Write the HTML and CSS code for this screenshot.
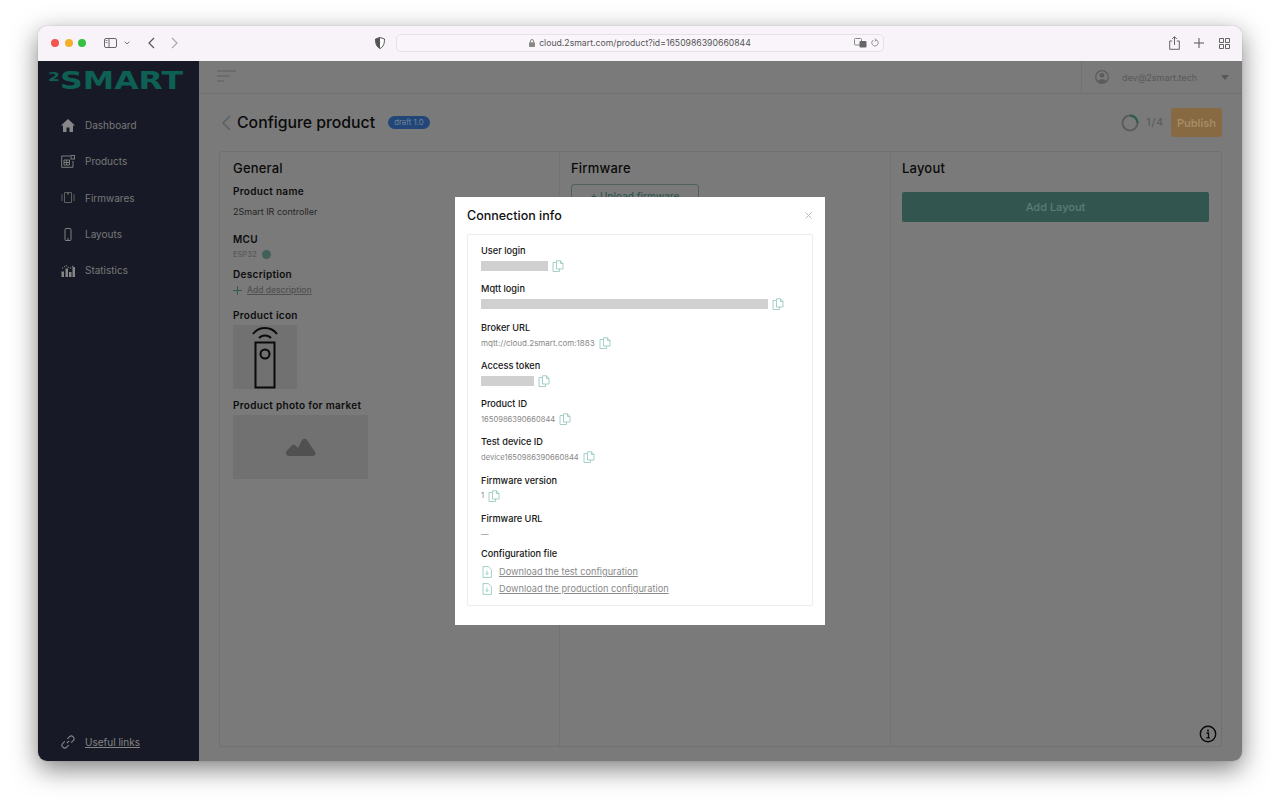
FILE: index.html
```html
<!DOCTYPE html>
<html lang="en">
<head>
    <meta charset="utf-8">
    <title>Configure product</title>
    <link rel="stylesheet" href="styles.css">
</head>
<body>
<svg class="defs" width="0" height="0">
    <symbol id="copy" viewBox="0 0 12 12">
        <path d="M4.5 2.5H1v9h6.5V9M4.5 2.5V9h6.5V3.5L8.5.8H4.5v1.7M8.5.8v2.7H11" fill="none" stroke="currentColor" stroke-width=".8"/>
    </symbol>
    <symbol id="file" viewBox="0 0 10 12">
        <path d="M1 .6h5.4L9.4 3.6v7.8H1zM5 4.5v4M3.4 7 5 8.6 6.6 7" fill="none" stroke="currentColor" stroke-width=".8"/>
    </symbol>
</svg>

<div class="window">
    <!-- browser bar -->
    <div class="bar">
        <div class="lights"><i class="red"></i><i class="yellow"></i><i class="green"></i></div>
        <svg class="bar-sidebar" width="13" height="10" viewBox="0 0 13 10"><rect x=".5" y=".5" width="12" height="9" rx="1.5" fill="none" stroke="#666"/><path d="M5 .5v9" stroke="#666"/><path d="M1.5 2.5h2M1.5 4.5h2" stroke="#888"/></svg>
        <svg class="bar-caret" width="6" height="4" viewBox="0 0 6 4"><path d="M.7.7 3 3l2.3-2.3" fill="none" stroke="#777"/></svg>
        <svg class="bar-back" width="7" height="12" viewBox="0 0 7 12"><path d="M6 1 1 6l5 5" fill="none" stroke="#555" stroke-width="1.2"/></svg>
        <svg class="bar-forward" width="7" height="12" viewBox="0 0 7 12"><path d="m1 1 5 5-5 5" fill="none" stroke="#aaa" stroke-width="1.2"/></svg>
        <svg class="bar-shield" width="10" height="12" viewBox="0 0 10 12"><path d="M5 .5 9.500 2c0 4.500-1 7.800-4.500 9.500C1.500 9.800.5 6.500.5 2z" fill="#fff" stroke="#555"/><path d="M5 .5.500 2C.5 6.500 1.500 9.800 5 11.500z" fill="#555"/></svg>
        <div class="url">
            <svg width="6" height="8" viewBox="0 0 6 8"><path d="M1.500 3.500V2a1.500 1.500 0 0 1 3 0v1.500" fill="none" stroke="#888"/><rect y="3.200" width="6" height="4.800" rx=".8" fill="#888"/></svg>
            <span>cloud.2smart.com/product?id=1650986390660844</span>
            <svg class="url-translate" width="13" height="10" viewBox="0 0 13 10"><rect x=".5" y=".5" width="7" height="6.500" rx="1" fill="none" stroke="#888"/><rect x="5.500" y="3" width="7" height="6.500" rx="1" fill="#666"/></svg>
            <svg class="url-reload" width="8" height="9" viewBox="0 0 8 9"><path d="M5.800 2.100A3.200 3.200 0 1 1 2.200 2.100M3.700.6l1.900 1.500-1.900 1" fill="none" stroke="#777" stroke-width=".8"/></svg>
        </div>
        <svg class="bar-share" width="11" height="14" viewBox="0 0 11 14"><path d="M3.200 5H.7v8.300h9.600V5H7.800M5.500 9V.8M3.200 3l2.300-2.300L7.800 3" fill="none" stroke="#555" stroke-width=".9"/></svg>
        <svg class="bar-plus" width="10" height="10" viewBox="0 0 10 10"><path d="M5 0v10M0 5h10" stroke="#555"/></svg>
        <svg class="bar-grid" width="11" height="11" viewBox="0 0 11 11"><path d="M.5.5h4v4h-4zM6.500.5h4v4h-4zM.5 6.500h4v4h-4zM6.500 6.500h4v4h-4z" fill="none" stroke="#555" stroke-width=".9"/></svg>
    </div>

    <div class="app">
        <aside class="sidebar">
            <svg class="logo" width="140" height="30" viewBox="0 0 140 30">
                <text x="0" y="15" class="logo-two" textLength="12" lengthAdjust="spacingAndGlyphs">2</text>
                <text x="12" y="23" class="logo-word" textLength="123" lengthAdjust="spacingAndGlyphs">SMART</text>
            </svg>
            <nav class="nav">
                <a class="nav-item"><svg width="14" height="13" viewBox="0 0 14 13"><path d="M7 0 0 6.500h2V13h3.500V8.500h3V13H12V6.500h2z" fill="#878787"/></svg>Dashboard</a>
                <a class="nav-item"><svg width="14" height="13" viewBox="0 0 14 13"><path d="M9 1H.7v11.300H12V6M3 5h5.500v5H3zM5.700 5v5M3 7.500h5.500" fill="none" stroke="#7d7d7d"/><rect x="10" y=".5" width="3.500" height="3.500" fill="none" stroke="#7d7d7d"/></svg>Products</a>
                <a class="nav-item"><svg width="14" height="13" viewBox="0 0 14 13"><path d="M3.500 1.500h7v10h-7zM1 3v7M13 3v7" fill="none" stroke="#5f5f5f"/><path d="M6 1.500h2v2H6z" fill="#5f5f5f"/></svg>Firmwares</a>
                <a class="nav-item"><svg width="14" height="13" viewBox="0 0 14 13"><rect x="4" y=".5" width="6" height="12" rx="1" fill="none" stroke="#808080"/><path d="M6 11h2" stroke="#808080"/></svg>Layouts</a>
                <a class="nav-item"><svg width="14" height="13" viewBox="0 0 14 13"><path d="M.5 7.500h2.500V13H.5zM4.500 4.500H7V13H4.500zM8 8h2.500v5H8zM11.500 3H14v10h-2.500z" fill="#878787"/><path d="M1 4.500 5 1.500 9 4.500l4-3.500" fill="none" stroke="#878787" stroke-dasharray="1.500 1"/></svg>Statistics</a>
            </nav>
            <a class="useful"><svg width="14" height="14" viewBox="0 0 14 14"><path d="M5.800 8.200 8.200 5.800M6.300 3.800 8.300 1.800a2.500 2.500 0 0 1 3.900 3.900L10.200 7.700M7.700 10.200 5.700 12.200a2.500 2.500 0 0 1-3.900-3.900L3.800 6.300" fill="none" stroke="#878787" stroke-width="1.100"/></svg><span>Useful links</span></a>
        </aside>

        <main class="main">
            <header class="topbar">
                <svg class="burger" width="19" height="13" viewBox="0 0 19 13"><path d="M0 1h19M0 6h13M0 11h7" stroke="#6c6c6c" stroke-width="2"/></svg>
                <div class="user">
                    <svg width="14" height="14" viewBox="0 0 14 14"><circle cx="7" cy="7" r="6.300" fill="none" stroke="#5c5c5c" stroke-width="1.300"/><circle cx="7" cy="5.300" r="2.400" fill="#5c5c5c"/><path d="M2.800 11c1-2.300 7.400-2.300 8.400 0l-2 2H4.800z" fill="#5c5c5c"/></svg>
                    <span class="user-mail">dev@2smart.tech</span>
                    <i class="user-caret"></i>
                </div>
            </header>

            <div class="title-row">
                <svg class="title-back" width="9" height="16" viewBox="0 0 9 16"><path d="M8 1 1 8l7 7" fill="none" stroke="#5e5e5e" stroke-width="1.500"/></svg>
                <h1>Configure product</h1>
                <span class="badge">draft 1.0</span>
                <svg class="ring" width="18" height="18" viewBox="0 0 18 18"><circle cx="9" cy="9" r="7.500" fill="none" stroke="#5c5c5c" stroke-width="2"/><path d="M9 1.500A7.500 7.500 0 0 1 16.500 9" fill="none" stroke="#2a5c51" stroke-width="2"/></svg>
                <span class="steps">1/4</span>
                <button class="publish">Publish</button>
            </div>

            <div class="panel">
                <section class="col col-general">
                    <h2>General</h2>
                    <h3 class="gap-name">Product name</h3>
                    <p class="value gap-value">2Smart IR controller</p>
                    <h3 class="gap-mcu">MCU</h3>
                    <p class="small"><span>ESP32</span><i class="chip"></i></p>
                    <h3 class="gap-desc">Description</h3>
                    <p class="add-desc"><svg width="9" height="9" viewBox="0 0 9 9"><path d="M4.500 0v9M0 4.500h9" stroke="#2a5c51"/></svg><span>Add description</span></p>
                    <h3 class="gap-icon">Product icon</h3>
                    <div class="icon-box">
                        <svg width="26" height="64" viewBox="0 0 26 64"><path d="M1 9C7 1 19 1 25 9M7 13c3-3.500 9-3.500 12 0" fill="none" stroke="#0a0a0a" stroke-width="2"/><rect x="3.500" y="17.500" width="19" height="45" fill="none" stroke="#0a0a0a" stroke-width="2"/><circle cx="13" cy="29" r="4.500" fill="none" stroke="#0a0a0a" stroke-width="2"/></svg>
                    </div>
                    <h3 class="gap-photo">Product photo for market</h3>
                    <div class="photo-box">
                        <svg width="30" height="18" viewBox="0 0 30 18"><path d="M3 18a3 3 0 0 1-2.300-5L6 7.500a2.500 2.500 0 0 1 3.500 0L12 10l4-8a3 3 0 0 1 5 0l8 12a2.500 2.500 0 0 1-2 4z" fill="#505050"/></svg>
                    </div>
                </section>
                <section class="col col-firmware">
                    <h2>Firmware</h2>
                    <button class="upload">+ Upload firmware</button>
                </section>
                <section class="col col-layout">
                    <h2>Layout</h2>
                    <button class="add-layout">Add Layout</button>
                </section>
            </div>
            <svg class="info" width="18" height="18" viewBox="0 0 18 18"><circle cx="9" cy="9" r="7.700" fill="none" stroke="#0a0a0a" stroke-width="1.400"/><path d="M7.500 8h2v4.500M7.300 12.800h3.600" fill="none" stroke="#0a0a0a" stroke-width="1.300"/><circle cx="9" cy="5.400" r="1" fill="#0a0a0a"/></svg>
        </main>

        <div class="modal-wrap">
            <div class="modal">
                <div class="modal-head">
                    <h4>Connection info</h4>
                    <svg width="7" height="7" viewBox="0 0 7 7"><path d="m.5.5 6 6M6.500.5l-6 6" stroke="#bbb"/></svg>
                </div>
                <div class="card">
                    <div class="field"><b>User login</b><div class="val"><i class="hidden-val w-user"></i><svg class="copy"><use href="#copy"/></svg></div></div>
                    <div class="field"><b>Mqtt login</b><div class="val"><i class="hidden-val w-mqtt"></i><svg class="copy"><use href="#copy"/></svg></div></div>
                    <div class="field"><b>Broker URL</b><div class="val"><span class="wide-val">mqtt://cloud.2smart.com:1883</span><svg class="copy"><use href="#copy"/></svg></div></div>
                    <div class="field"><b>Access token</b><div class="val"><i class="hidden-val w-token"></i><svg class="copy"><use href="#copy"/></svg></div></div>
                    <div class="field"><b>Product ID</b><div class="val"><span>1650986390660844</span><svg class="copy"><use href="#copy"/></svg></div></div>
                    <div class="field"><b>Test device ID</b><div class="val"><span>device1650986390660844</span><svg class="copy"><use href="#copy"/></svg></div></div>
                    <div class="field"><b>Firmware version</b><div class="val"><span>1</span><svg class="copy"><use href="#copy"/></svg></div></div>
                    <div class="field field-url"><b>Firmware URL</b><div class="val"><span>—</span></div></div>
                    <div class="field field-config"><b>Configuration file</b>
                        <a class="dl"><svg width="10" height="12"><use href="#file"/></svg><span>Download the test configuration</span></a>
                        <a class="dl"><svg width="10" height="12"><use href="#file"/></svg><span>Download the production configuration</span></a>
                    </div>
                </div>
            </div>
        </div>
    </div>
</div>
</body>
</html>
```

FILE: styles.css
```css
* {
    box-sizing: border-box;
}

html, body {
    margin: 0;
    height: 811px;
    overflow: hidden;
    background: #fff;
}

body {
    padding: 26px 38px 50px;
    font-family: "Inter", "Liberation Sans", sans-serif;
}

.defs {
    position: absolute;
}

h1, h2, h3, h4, p {
    margin: 0;
    font-weight: 500;
}

.window {
    height: 735px;
    display: flex;
    flex-direction: column;
    border-radius: 9px;
    overflow: hidden;
    box-shadow: 0 8px 26px rgba(0, 0, 0, .5), 0 0 1px rgba(0, 0, 0, .4);
}

/* browser bar */
.bar {
    height: 35px;
    flex: none;
    display: flex;
    align-items: center;
    padding: 0 0 1px 13px;
    background: #f7f3f9;
}

.lights {
    display: flex;
    gap: 5.500px;
}

.lights i {
    width: 8px;
    height: 8px;
    border-radius: 50%;
}

.red { background: #f2574e; }
.yellow { background: #f4b02c; }
.green { background: #34c041; }

.bar-sidebar { margin-left: 18px; }
.bar-caret { margin-left: 7px; }
.bar-back { margin-left: 18px; }
.bar-forward { margin-left: 16px; }
.bar-shield { margin-left: 197px; }

.url {
    width: 488px;
    height: 18px;
    margin-left: 11px;
    display: flex;
    align-items: center;
    justify-content: center;
    gap: 4px;
    position: relative;
    border: 1px solid #e6e0e8;
    border-radius: 5px;
    background: #f9f5fa;
    font-size: 8.700px;
    color: #555;
}

.url-translate, .url-reload {
    position: absolute;
    top: 3px;
}

.url-translate { right: 16px; }
.url-reload { right: 4px; }

.bar-share { margin-left: 285px; }
.bar-plus { margin-left: 14px; }
.bar-grid { margin-left: 15px; }

/* app */
.app {
    flex: 1;
    min-height: 0;
    display: flex;
    position: relative;
}

.sidebar {
    width: 161px;
    flex: none;
    display: flex;
    flex-direction: column;
    background: #171a26;
    padding-bottom: 12px;
}

.logo {
    display: block;
    flex: none;
    margin: 5px 0 0 10px;
}

.logo-two, .logo-word {
    font-family: "DejaVu Sans", sans-serif;
    font-weight: 700;
    fill: #0f6054;
}

.logo-two { font-size: 12px; }
.logo-word { font-size: 24.500px; }

.nav {
    margin-top: 11px;
}

.nav-item {
    height: 36.300px;
    display: flex;
    align-items: center;
    gap: 10px;
    padding-left: 23px;
    font-size: 10px;
    color: #787878;
}

.useful {
    margin-top: auto;
    display: flex;
    align-items: center;
    gap: 10px;
    padding-left: 23px;
    font-size: 10px;
    color: #858585;
    text-decoration: underline;
}

.main {
    flex: 1;
    min-width: 0;
    background: #7a7a7a;
    padding-bottom: 14px;
    display: flex;
    flex-direction: column;
    position: relative;
}

.topbar {
    height: 33px;
    flex: none;
    display: flex;
    align-items: center;
    justify-content: space-between;
    padding-left: 18px;
    border-bottom: 1px solid #717171;
}

.burger { margin-top: -2px; }

.user {
    width: 161px;
    height: 32px;
    display: flex;
    align-items: center;
    padding-left: 13px;
    border-left: 1px solid #717171;
    font-size: 9px;
    color: #585858;
}

.user-mail { margin-left: 13px; }

.user-caret {
    margin-left: 24px;
    border: 4px solid transparent;
    border-top: 5px solid #585858;
    border-bottom: 0;
}

.title-row {
    height: 57px;
    flex: none;
    display: flex;
    align-items: center;
    padding: 0 20px 0 23px;
}

.title-row h1 {
    margin-left: 6px;
    font-size: 15.800px;
    font-weight: 500;
    color: #0a0a0a;
}

.badge {
    margin-left: 13px;
    height: 13px;
    padding: 0 6px;
    border-radius: 7px;
    background: #234679;
    font-size: 7.800px;
    line-height: 13px;
    color: #728499;
}

.ring { margin-left: auto; }

.steps {
    margin-left: 7px;
    font-size: 10.500px;
    color: #585858;
    letter-spacing: 1px;
}

.publish {
    width: 51px;
    height: 29px;
    margin-left: 7px;
    padding: 0;
    border: 0;
    border-radius: 3px;
    background: #876a42;
    font: 600 11px "Inter", sans-serif;
    color: #a58c66;
}

.panel {
    flex: 1;
    min-height: 0;
    margin: 0 20px;
    display: flex;
    border: 1px solid #717171;
    border-radius: 3px;
}

.col {
    padding: 7px 12px 0 13px;
}

.col-general { width: 339px; }

.col-firmware {
    width: 332px;
    padding-left: 11px;
    border-left: 1px solid #727272;
    border-right: 1px solid #727272;
}

.col-layout {
    flex: 1;
    padding-left: 11px;
}

.col h2 {
    height: 18px;
    font-size: 13px;
    line-height: 18px;
    font-weight: 500;
    letter-spacing: .2px;
    color: #0a0a0a;
}

.col h3 {
    font-size: 10px;
    line-height: 14px;
    font-weight: 600;
    letter-spacing: .3px;
    color: #0c0c0c;
}

.gap-name { margin-top: 7px; }
.gap-value { margin-top: 7px; }
.gap-mcu { margin-top: 13px; }
.gap-desc { margin-top: 7px; }
.gap-icon { margin-top: 11px; }
.gap-photo { margin-top: 9px; }

.col .value {
    font-size: 9px;
    line-height: 14px;
    font-weight: 400;
    color: #262626;
}

.small {
    margin-top: 2px;
    height: 12px;
    display: flex;
    align-items: center;
    gap: 5px;
    font-size: 7.500px;
    color: #585858;
}

.chip {
    width: 9px;
    height: 9px;
    border-radius: 50%;
    background: #41605a;
}

.add-desc {
    margin-top: 2px;
    height: 14px;
    display: flex;
    align-items: center;
    gap: 5px;
    font-size: 8.500px;
    color: #505050;
}

.add-desc span {
    text-decoration: underline;
}

.icon-box {
    width: 64px;
    height: 64px;
    margin-top: 3px;
    display: flex;
    justify-content: center;
    background: #717171;
}

.photo-box {
    width: 135px;
    height: 64px;
    margin-top: 3px;
    display: flex;
    align-items: center;
    justify-content: center;
    background: #717171;
}

.upload {
    width: 128px;
    height: 24px;
    margin-top: 7px;
    padding: 0;
    border: 1px solid #50625f;
    border-radius: 3px;
    background: transparent;
    font: 500 10px "Inter", sans-serif;
    color: #335650;
}

.add-layout {
    width: 307px;
    height: 30px;
    margin-top: 15px;
    padding: 0;
    border: 0;
    border-radius: 2px;
    background: #32564f;
    font: 500 11px "Inter", sans-serif;
    color: #5d7d76;
}

.info {
    position: absolute;
    right: 25px;
    bottom: 18px;
}

/* connection info dialog */
.modal-wrap {
    position: absolute;
    inset: 0;
    display: flex;
    align-items: center;
    justify-content: center;
}

.modal {
    width: 370px;
    height: 428px;
    padding: 0 12px;
    background: #fff;
}

.modal-head {
    height: 37px;
    display: flex;
    align-items: center;
    justify-content: space-between;
    padding: 0 1px 0 0;
}

.modal-head h4 {
    font-size: 12.500px;
    font-weight: 500;
    color: #111;
}

.card {
    height: 372px;
    padding: 9px 13px 0;
    border: 1px solid #ececec;
    border-radius: 2px;
}

.field {
    height: 38.300px;
}

.field b {
    display: block;
    font-size: 9.200px;
    line-height: 14px;
    font-weight: 500;
    color: #151515;
}

.val {
    height: 16px;
    display: flex;
    align-items: center;
    gap: 4px;
    font-size: 7.600px;
    color: #888;
}

.wide-val {
    font-size: 8px;
}

.hidden-val {
    height: 10px;
    background: #d0d0d0;
}

.w-user { width: 67px; }
.w-mqtt { width: 287px; }
.w-token { width: 53px; }

.copy {
    width: 12px;
    height: 12px;
    color: #8dc4ba;
}

.field-url {
    height: 35px;
}

.field-config {
    height: auto;
}

.dl {
    height: 17px;
    display: flex;
    align-items: center;
    gap: 7px;
    font-size: 9.200px;
    color: #8a8a8a;
    padding-left: 1px;
}

.dl:first-of-type {
    margin-top: 2px;
}

.dl svg {
    color: #8dc4ba;
}

.dl span {
    text-decoration: underline;
}
```
